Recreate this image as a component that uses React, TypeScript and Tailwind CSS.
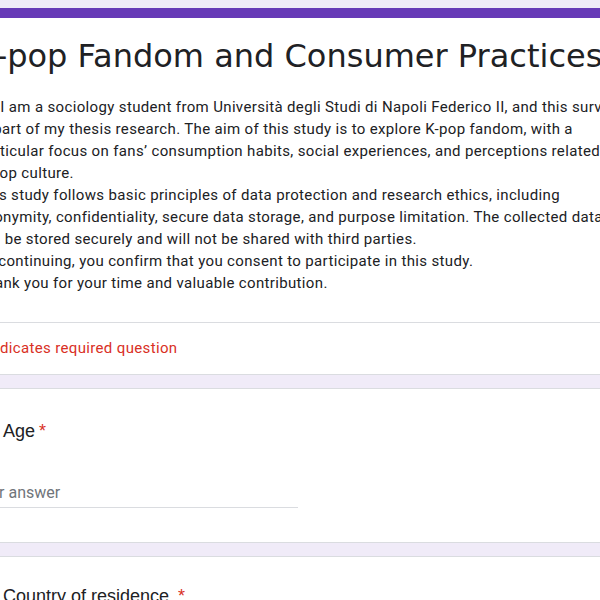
const body = "font-['Roboto',sans-serif]";
const heading = "font-['Liberation_Sans',Arial,sans-serif]";

const intro = [
  "Hi! I am a sociology student from Università degli Studi di Napoli Federico II,  and this survey",
  "is part of my thesis research. The aim of this study is to explore K-pop fandom, with a",
  "particular focus on fans’ consumption habits, social experiences, and perceptions related to",
  "K-pop culture.",
  "This study follows basic principles of data protection and research ethics, including",
  "anonymity, confidentiality, secure data storage, and purpose limitation. The collected data",
  "will be stored securely and will not be shared with third parties.",
  "By continuing, you confirm that you consent to participate in this study.",
  "Thank you for your time and valuable contribution.",
];

function Card({ children, className = "" }: { children: React.ReactNode; className?: string }) {
  return <div className={`border-y border-[#dadce0] bg-white ${className}`}>{children}</div>;
}

function Question({ label, gap = false }: { label: string; gap?: boolean }) {
  return (
    <div className={`${heading} text-[18px] leading-[24px] text-[#202124] whitespace-nowrap`}>
      {label}
      {gap && " "}
      <span className="ml-1 text-[#d93025]">*</span>
    </div>
  );
}

export default function App() {
  return (
    <div className="h-[600px] w-[600px] overflow-hidden bg-[#f0ebf8] pt-2">
      {/* header card */}
      <div className="border-b border-[#dadce0] bg-white">
        <div className="h-[10px] bg-[#673ab7]" />
        <div className="border-b border-[#dadce0] pb-[28px] pt-[18px]">
          <h1 className="ml-[-22px] whitespace-nowrap font-['DejaVu_Sans',sans-serif] text-[32px] leading-[40px] text-[#202124]">
            K-pop Fandom and Consumer Practices
          </h1>
          <div className={`${body} ml-[-23px] mt-5 text-[15px] leading-[22px] tracking-[0.35px] text-[#202124]`}>
            {intro.map((line) => (
              <div key={line} className="whitespace-nowrap">
                {line}
              </div>
            ))}
          </div>
        </div>
        <div className={`${body} ml-[-24px] flex h-[51px] items-center text-[15px] tracking-[0.35px] text-[#d93025]`}>
          * Indicates required question
        </div>
      </div>

      <div className="h-[13px]" />

      <Card className="pb-[34px] pl-[3px] pt-[30px]">
        <Question label="Age" />
        <div className="ml-[-31px] mt-[38px] w-[326px] border-b border-[#dadce0] pb-[2px]">
          <div className={`${body} text-[16px] leading-[24px] text-[#70757a]`}>Your answer</div>
        </div>
      </Card>

      <div className="h-[13px]" />

      <Card className="pl-[3px] pt-[27px] h-[100px]">
        <Question label="Country of residence" gap />
      </Card>
    </div>
  );
}
